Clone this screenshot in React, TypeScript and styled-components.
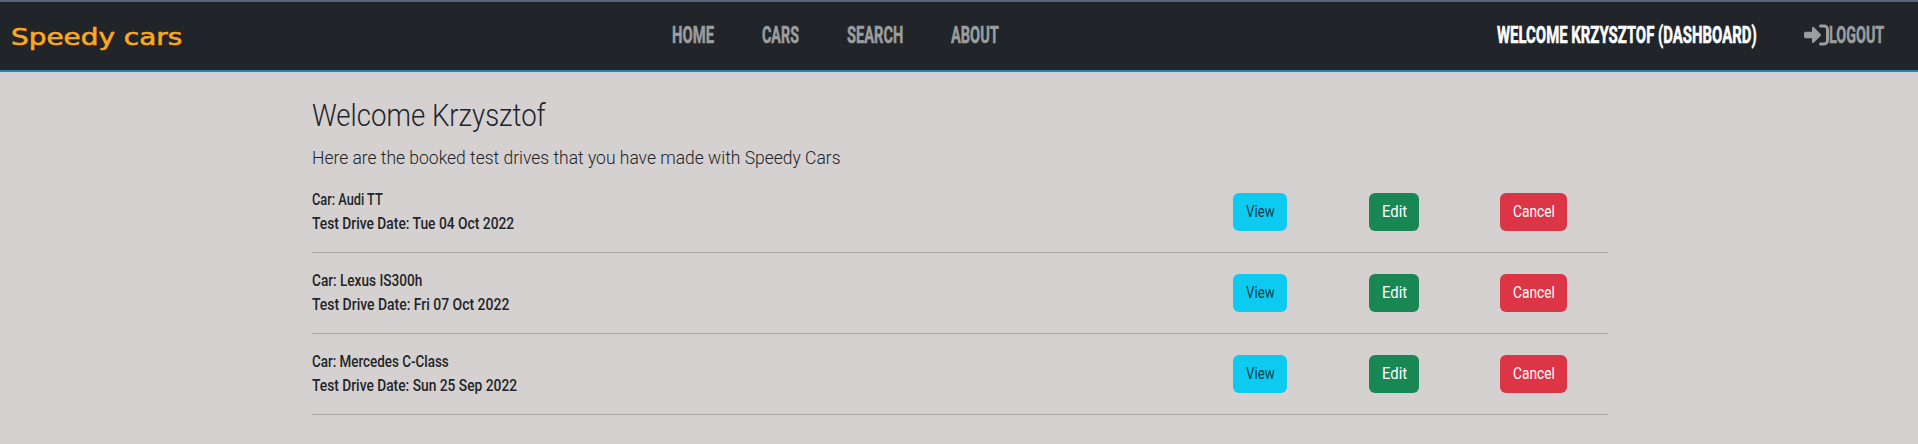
import React, { useLayoutEffect, useRef, useState } from 'react';
import styled, { createGlobalStyle } from 'styled-components';

const GlobalStyle = createGlobalStyle`
  * { box-sizing: border-box; }
  body {
    margin: 0;
    background: #d5d1d0;
    color: #212529;
    font-family: Roboto, "Liberation Sans", sans-serif;
    font-size: 16px;
    line-height: 24px;
  }
`;

const FitBox = styled.span<{ $width: number }>`
  display: block;
  flex: none;
  width: ${(p) => p.$width}px;
  white-space: nowrap;
`;

const FitInner = styled.span`
  display: inline-block;
  transform-origin: 0 50%;
`;

/* Sets a line of text to an exact measure by condensing or expanding its letters. */
function Fit({ width, children }: { width: number; children: string }) {
  const ref = useRef<HTMLSpanElement>(null);
  const [scale, setScale] = useState(1);
  useLayoutEffect(() => {
    if (ref.current) setScale(width / ref.current.offsetWidth);
  }, [width, children]);
  return (
    <FitBox $width={width}>
      <FitInner ref={ref} style={{ transform: `scaleX(${scale})` }}>{children}</FitInner>
    </FitBox>
  );
}

const Navbar = styled.header`
  display: grid;
  grid-template-columns: 672px 1fr auto;
  align-items: center;
  height: 72px;
  padding-right: 34px;
  background: #212529;
  border-top: 2px solid #5a6675;
  border-bottom: 2px solid #1a86bf;
`;

const Brand = styled.a`
  padding: 1px 0 0 11px;
  color: #fba81f;
  font: 400 23px/32px "DejaVu Sans", sans-serif;
  -webkit-text-stroke: 0.6px #fba81f;
`;

const NavGroup = styled.nav<{ $gap: number }>`
  display: flex;
  align-items: center;
  gap: ${(p) => p.$gap}px;
  padding-bottom: 2px;
`;

const NavLink = styled.a<{ $active?: boolean }>`
  display: flex;
  align-items: center;
  color: ${(p) => (p.$active ? '#ffffff' : '#9b9d9e')};
  font-size: 24px;
  font-weight: 700;
  line-height: 36px;
  -webkit-text-stroke: 0.6px currentColor;
`;

const LogoutIcon = styled.svg`
  display: block;
  width: 25px;
  height: 22px;
`;

const Container = styled.main`
  width: 1296px;
  margin-left: 312px;
  padding-top: 25px;
`;

const Title = styled.h1`
  margin: 0 0 8px;
  font-size: 31px;
  font-weight: 300;
  line-height: 38px;
`;

const Lead = styled.p`
  margin: 0 0 15px;
  font-size: 19px;
  font-weight: 300;
  line-height: 30px;
`;

const Booking = styled.section`
  display: flex;
  align-items: center;
  height: 65px;
  margin-bottom: 16px;
  padding-bottom: 16px;
  border-bottom: 1px solid #a6a4a4;
`;

const Details = styled.div`
  width: 921px;
  font-weight: 500;
`;

const Actions = styled.div`
  display: grid;
  grid-template-columns: 136px 131px 67px;
  justify-items: start;
`;

const tones = {
  info: ['#0dcaf0', '#153c47'],
  success: ['#198754', '#ffffff'],
  danger: ['#dc3545', '#ffffff'],
};

const Button = styled.button<{ $tone: keyof typeof tones }>`
  height: 38px;
  padding: 0 12.5px;
  border: 0;
  border-radius: 6px;
  background: ${(p) => tones[p.$tone][0]};
  color: ${(p) => tones[p.$tone][1]};
  font: 400 16px/24px Roboto, sans-serif;
`;

const links = [
  { label: 'HOME', width: 42 },
  { label: 'CARS', width: 37 },
  { label: 'SEARCH', width: 56 },
  { label: 'ABOUT', width: 48 },
];

const bookings = [
  { car: 'Car: Audi TT', carWidth: 71, date: 'Test Drive Date: Tue 04 Oct 2022', dateWidth: 202 },
  { car: 'Car: Lexus IS300h', carWidth: 110.5, date: 'Test Drive Date: Fri 07 Oct 2022', dateWidth: 197 },
  { car: 'Car: Mercedes C-Class', carWidth: 136.5, date: 'Test Drive Date: Sun 25 Sep 2022', dateWidth: 205 },
];

export default function App() {
  return (
    <>
      <GlobalStyle />
      <Navbar>
        <Brand><Fit width={171}>Speedy cars</Fit></Brand>
        <NavGroup $gap={48}>
          {links.map((l) => (
            <NavLink key={l.label}><Fit width={l.width}>{l.label}</Fit></NavLink>
          ))}
        </NavGroup>
        <NavGroup $gap={47}>
          <NavLink $active><Fit width={260}>WELCOME KRZYSZTOF (DASHBOARD)</Fit></NavLink>
          <NavLink>
            <LogoutIcon viewBox="0 0 25 22" fill="none">
              <path d="M1.7 7.7H8V4.2c0-1.4 1.1-1.9 2-.9l6.5 6.6c.6.6.6 1.4 0 2L10 18.6c-.9.9-2 .4-2-.9v-3.4H1.7C.7 14.3 0 13.6 0 12.6V9.4c0-1 .7-1.7 1.7-1.7Z" fill="currentColor" />
              <path d="M16.5 2H20a3.5 3.5 0 0 1 3.5 3.5v11A3.5 3.5 0 0 1 20 20h-3.5" stroke="currentColor" strokeWidth="3" strokeLinecap="round" />
            </LogoutIcon>
            <Fit width={55}>LOGOUT</Fit>
          </NavLink>
        </NavGroup>
      </Navbar>
      <Container>
        <Title><Fit width={234}>Welcome Krzysztof</Fit></Title>
        <Lead><Fit width={529}>Here are the booked test drives that you have made with Speedy Cars</Fit></Lead>
        {bookings.map((b) => (
          <Booking key={b.car}>
            <Details>
              <Fit width={b.carWidth}>{b.car}</Fit>
              <Fit width={b.dateWidth}>{b.date}</Fit>
            </Details>
            <Actions>
              <Button $tone="info"><Fit width={29}>View</Fit></Button>
              <Button $tone="success"><Fit width={25}>Edit</Fit></Button>
              <Button $tone="danger"><Fit width={42}>Cancel</Fit></Button>
            </Actions>
          </Booking>
        ))}
      </Container>
    </>
  );
}
